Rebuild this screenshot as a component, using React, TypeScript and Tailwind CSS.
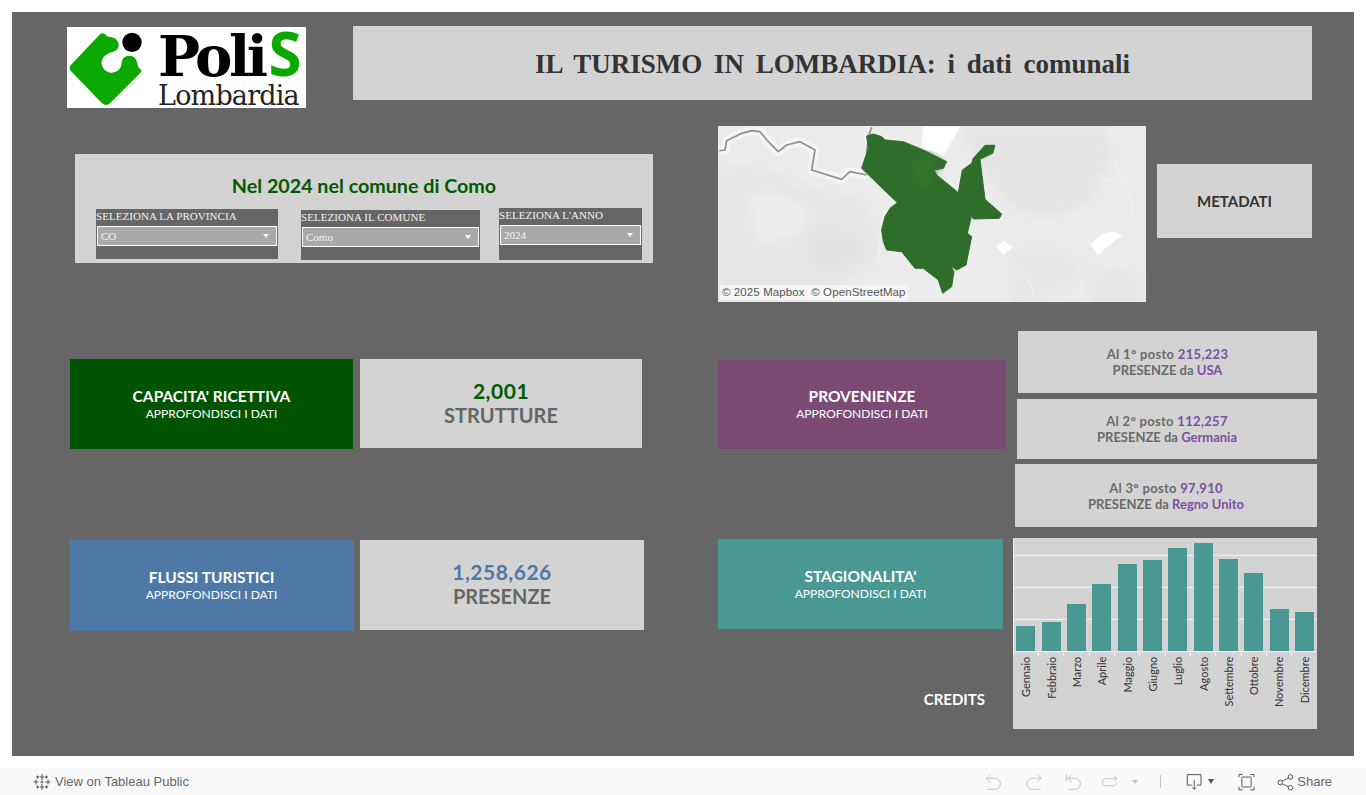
import React from 'react';

const TREBUCHET = 'font-["Lato",sans-serif]';

const MONTHS = [
  { name: 'Gennaio', x: 33, top: 288, label: 62 },
  { name: 'Febbraio', x: 111, top: 276, label: 139 },
  { name: 'Marzo', x: 186, top: 222, label: 215 },
  { name: 'Aprile', x: 261, top: 162, label: 290 },
  { name: 'Maggio', x: 339, top: 102, label: 367 },
  { name: 'Giugno', x: 414, top: 90, label: 443 },
  { name: 'Luglio', x: 489, top: 54, label: 518 },
  { name: 'Agosto', x: 567, top: 39, label: 595 },
  { name: 'Settembre', x: 642, top: 87, label: 670 },
  { name: 'Ottobre', x: 717, top: 129, label: 746 },
  { name: 'Novembre', x: 795, top: 237, label: 822 },
  { name: 'Dicembre', x: 870, top: 246, label: 899 },
];

const RIVER = 'M28 92 L45 90 L50 62 L95 40 L125 32 L150 35 L175 65 L205 95 L230 75 L270 65 L315 90 L305 150 L395 178 L420 155 L470 165';

const Logo = () => (
  <div className="w-[239px] h-[81px] mt-px bg-white flex shrink-0">
    <svg viewBox="201 81 273 243" className="w-[91px] h-[81px] shrink-0">
      <path
        fill="#0aa800"
        d="M300 103 Q308 97 315 103 Q322 112 335 112 Q352 115 356 132 Q358 148 340 155 Q322 158 310 172 Q298 190 312 208 Q328 225 350 214 Q365 205 365 185 Q368 168 388 167 Q408 168 412 190 Q414 205 424 210 Q426 215 420 220 L330 310 Q318 320 306 310 L212 212 Q205 205 212 196 Z"
      />
      <circle cx="396" cy="127" r="29" fill="#000" />
    </svg>
    <div className="flex flex-col">
      <div className="font-['DejaVu_Serif',serif] font-bold text-[56px] leading-[52px] tracking-[-3.5px] text-black whitespace-nowrap">
        Poli<span className="font-['Open_Sans',sans-serif] text-[60px] tracking-normal text-[#0aa800] ml-[4px]">S</span>
      </div>
      <div className="font-['DejaVu_Serif',serif] text-[27px] leading-[28px] tracking-[-0.8px] text-[#222] whitespace-nowrap">Lombardia</div>
    </div>
  </div>
);

interface FilterProps {
  label: string;
  value: string;
  className: string;
}

const Filter: React.FC<FilterProps> = ({ label, value, className }) => (
  <div className={`bg-[#666666] font-["Liberation_Serif",serif] text-[#f2f2f2] ${className}`}>
    <div className="text-[11px] leading-[14px] tracking-[0.06px] whitespace-nowrap">{label}</div>
    <div className="mx-px mt-[3px] h-5 border border-white bg-[#a9a9a9] flex items-center justify-between pl-[3px] pr-[7px] text-[11px]">
      <span>{value}</span>
      <span className="w-0 h-0 border-x-[3px] border-x-transparent border-t-[4px] border-t-white" />
    </div>
  </div>
);

const MapPanel = () => (
  <div className="relative w-[428px] h-[176px] bg-[#ebebeb] shrink-0 overflow-hidden">
    <svg viewBox="24 18 1284 528" className="w-full h-full block">
      <defs>
        <filter id="soft" x="-10%" y="-10%" width="120%" height="120%">
          <feGaussianBlur stdDeviation="14" />
        </filter>
      </defs>
      <rect x="24" y="18" width="1284" height="528" fill="#ececec" />
      <g filter="url(#soft)">
        <path d="M24 150 Q120 110 250 180 Q330 220 450 230 Q520 330 500 420 Q400 540 24 546 Z" fill="#e6e6e6" />
        <path d="M120 230 Q220 200 300 290 Q260 380 140 360 Z" fill="#ededed" />
        <path d="M300 340 Q400 300 470 380 Q420 470 310 450 Z" fill="#e2e2e2" />
        <path d="M750 20 H1180 Q1240 120 1140 240 Q1040 320 920 270 Q820 180 750 20 Z" fill="#e4e4e4" />
        <path d="M900 400 Q1050 340 1130 450 Q1080 540 900 546 Z" fill="#e7e7e7" />
        <path d="M1130 470 Q1220 420 1300 470 L1300 546 H1130 Z" fill="#e6e6e6" />
      </g>
      <path d={RIVER} fill="none" stroke="#f5f5f5" strokeWidth="26" strokeLinejoin="round" />
      <path d="M1150 155 Q1200 195 1235 175 Q1265 225 1270 300 Q1290 350 1305 355 M1215 130 Q1225 150 1235 175" fill="none" stroke="#f4f4f4" strokeWidth="3" />
      <path d="M380 30 Q420 50 470 70 M240 210 Q270 180 280 170 M460 190 Q480 230 530 260 M510 370 Q500 410 520 430 M920 440 Q960 470 970 520" fill="none" stroke="#f4f4f4" strokeWidth="3" />
      <path d="M640 20 H750 L700 110 L635 80 Z" fill="#ffffff" />
      <path d="M858 380 L880 363 L908 380 L880 405 Z" fill="#ffffff" />
      <path d="M1142 375 Q1170 335 1210 335 L1240 345 Q1200 370 1165 405 Z" fill="#ffffff" />
      <path d={RIVER} fill="none" stroke="#8f8f8f" strokeWidth="5" strokeLinejoin="round" />
      <path d="M470 100 L475 50 L485 22" fill="none" stroke="#8f8f8f" strokeWidth="5" />
      <path
        fill="#2e6e2a"
        stroke="#2e6e2a"
        strokeWidth="3"
        strokeLinejoin="round"
        d="M470 48 L490 42 L515 50 L525 60 L580 65 L640 90 L710 125 L700 145 L672 150 L680 165 L745 218 L757 150 L785 130 L790 115 L825 76 L855 76 L848 100 L810 118 L825 238 L875 282 L868 295 L790 297 L785 285 L772 340 L785 350 L768 435 L740 450 L722 438 L732 455 L725 500 L698 520 L685 480 L640 445 L615 445 L575 395 L530 390 L520 365 L515 330 L525 290 L540 265 L562 248 L455 145 L475 85 Z"
      />
      <path d="M600 130 L640 100 L695 130 L670 150 L660 200 L610 200 Z" fill="#32732e" filter="url(#soft)" />
    </svg>
    <div className='absolute left-[2px] bottom-[2px] px-[2px] bg-[#f6f6f6] text-[11.5px] tracking-[0.1px] leading-[15px] text-[#555] font-["Liberation_Sans",sans-serif] whitespace-nowrap'>
      © 2025 Mapbox&nbsp; © OpenStreetMap
    </div>
  </div>
);

interface SectionProps {
  title: string;
  className: string;
}

const SectionButton: React.FC<SectionProps> = ({ title, className }) => (
  <div className={`flex flex-col items-center justify-center text-white ${TREBUCHET} ${className}`}>
    <div className="text-[15.5px] leading-[19px] font-bold whitespace-nowrap">{title}</div>
    <div className="text-[12px] leading-[16px] whitespace-nowrap">APPROFONDISCI I DATI</div>
  </div>
);

interface KpiProps {
  value: string;
  label: string;
  color: string;
  className: string;
}

const Kpi: React.FC<KpiProps> = ({ value, label, color, className }) => (
  <div className={`bg-[#d3d3d3] pb-[2px] flex flex-col items-center justify-center ${TREBUCHET} ${className}`}>
    <div className={`text-[21px] leading-[25px] font-bold tracking-[0.5px] ${color}`}>{value}</div>
    <div className="text-[20px] leading-[25px] font-bold text-[#666666]">{label}</div>
  </div>
);

interface RankProps {
  pos: string;
  value: string;
  country: string;
  className: string;
}

const Rank: React.FC<RankProps> = ({ pos, value, country, className }) => (
  <div className={`bg-[#d3d3d3] flex flex-col items-center justify-center text-[13px] leading-4 font-bold text-[#6a6a6a] ${TREBUCHET} ${className}`}>
    <div className="tracking-[0.3px]">
      Al {pos}° posto <span className="text-[#7b4fa3]">{value}</span>
    </div>
    <div>
      PRESENZE da <span className="text-[#7b4fa3]">{country}</span>
    </div>
  </div>
);

const MonthsChart = () => (
  <div className="w-[304px] h-[191px] bg-[#d3d3d3] shrink-0">
    <svg viewBox="24 24 912 573" className="w-full h-full block">
      {[76, 172, 268].map((y) => (
        <line key={y} x1="24" x2="936" y1={y} y2={y} stroke="#f4f4f4" strokeWidth="3" />
      ))}
      {MONTHS.map((m) => (
        <rect key={m.name} x={m.x} y={m.top} width="57" height={363 - m.top} fill="#499894" />
      ))}
      <line x1="25" x2="25" y1="24" y2="365" stroke="#f4f4f4" strokeWidth="3" />
      <line x1="24" x2="936" y1="365" y2="365" stroke="#f4f4f4" strokeWidth="3" />
      {[24, 100, 175, 253, 328, 403, 481, 556, 631, 709, 784, 859].map((x) => (
        <line key={x} x1={x} x2={x} y1="365" y2="378" stroke="#f4f4f4" strokeWidth="3" />
      ))}
      {MONTHS.map((m) => (
        <text
          key={m.name}
          x={m.label + 13}
          y="380"
          transform={`rotate(-90 ${m.label + 13} 380)`}
          textAnchor="end"
          fontSize="33"
          fill="#333333"
          fontFamily="Lato, sans-serif"
        >
          {m.name}
        </text>
      ))}
    </svg>
  </div>
);

const Toolbar = () => (
  <div className='h-[27px] mt-3 bg-[#f9f9f9] flex items-center font-["Liberation_Sans",sans-serif] text-[13px] text-[#666666]'>
    <svg viewBox="0 0 18 18" className="w-[18px] h-[18px] ml-[33px] mr-1" stroke="#555" strokeWidth="1" fill="none">
      <path d="M9 1V7 M6.5 4H11.5 M9 11V17 M6.5 14H11.5 M3 6.5V11.5 M0.5 9H5.5 M15 6.5V11.5 M12.5 9H17.5 M4.5 2.5V5.5 M3 4H6 M13.5 2.5V5.5 M12 4H15 M4.5 12.5V15.5 M3 14H6 M13.5 12.5V15.5 M12 14H15 M9 7.5V10.5 M7.5 9H10.5" />
    </svg>
    <span>View on Tableau Public</span>

    <div className="ml-auto mr-[34px] flex items-center">
      <svg viewBox="45 68 55 55" className="w-[18px] h-[18px]" fill="none" stroke="#c4c4c4" strokeWidth="3">
        <path d="M60 73 L49 84 L60 95 M49 84 H75 A17 17 0 0 1 75 118 H50" />
      </svg>
      <svg viewBox="165 68 55 55" className="w-[18px] h-[18px] ml-[22px]" fill="none" stroke="#c4c4c4" strokeWidth="3">
        <path d="M203 73 L214 84 L203 95 M214 84 H188 A17 17 0 0 0 188 118 H213" />
      </svg>
      <svg viewBox="285 68 55 55" className="w-[18px] h-[18px] ml-[22px]" fill="none" stroke="#c4c4c4" strokeWidth="3">
        <path d="M289 72 V94 M305 73 L294 84 L305 95 M294 84 H315 A17 17 0 0 1 315 118 H296" />
      </svg>
      <svg viewBox="393 68 55 55" className="w-[18px] h-[18px] ml-[18px]" fill="none" stroke="#c4c4c4" strokeWidth="3">
        <path d="M432 76 L442 85 L432 94 M440 85 H408 A11 11 0 0 0 408 107 H432 A11 11 0 0 0 441 97" />
      </svg>
      <span className="ml-[13px] w-0 h-0 border-x-[3.5px] border-x-transparent border-t-[4px] border-t-[#c4c4c4]" />
      <span className="ml-[22px] w-px h-[13px] bg-[#c4c4c4]" />
      <svg viewBox="652 68 50 55" className="w-[17px] h-[18px] ml-[25px]" fill="none" stroke="#555" strokeWidth="3">
        <path d="M668 105 H655 V73 H697 V105 H684 M676 90 V118 M670 112 L676 118 L682 112" />
      </svg>
      <span className="ml-[5px] w-0 h-0 border-x-[3.5px] border-x-transparent border-t-[5px] border-t-[#555]" />
      <svg viewBox="805 68 53 55" className="w-[17px] h-[18px] ml-[24px]" fill="none" stroke="#555" strokeWidth="3">
        <path d="M808 80 V72 H820 M843 72 H855 V80 M855 110 V120 H843 M820 120 H808 V110" />
        <rect x="817" y="80" width="29" height="31" rx="2" />
      </svg>
      <svg viewBox="918 68 50 55" className="w-[17px] h-[18px] ml-[22px]" fill="none" stroke="#555" strokeWidth="3">
        <circle cx="927" cy="97" r="7" />
        <circle cx="958" cy="80" r="7" />
        <circle cx="958" cy="113" r="7" />
        <path d="M933 93 L952 83 M933 101 L952 110" />
      </svg>
      <span className="ml-[3px] font-medium">Share</span>
    </div>
  </div>
);

export default function App() {
  return (
    <div className="w-[1366px] h-[795px] bg-white overflow-hidden pt-3">
      <div className="ml-3 w-[1342px] h-[744px] bg-[#666666] pt-[14px]">
        {/* Header */}
        <div className="flex items-start h-[82px] pl-[55px]">
          <Logo />
          <div className='ml-[47px] w-[959px] h-[74px] pt-[2px] bg-[#d3d3d3] flex items-center justify-center font-["Liberation_Serif",serif] font-bold text-[27px] text-[#333333] [word-spacing:5px]'>
            IL TURISMO IN LOMBARDIA: i dati comunali
          </div>
        </div>

        <div className="flex pl-[55px]">
          {/* Left column */}
          <div className="w-[586px] shrink-0">
            <div className="mt-[46px] ml-2 w-[578px] h-[109px] bg-[#d3d3d3]">
              <div className={`pt-[21px] text-center text-[19.7px] leading-[22px] font-bold text-[#005a00] ${TREBUCHET}`}>
                Nel 2024 nel comune di Como
              </div>
              <div className="flex items-start mt-3">
                <Filter label="SELEZIONA LA PROVINCIA" value="CO" className="ml-[21px] w-[182px] h-[50px]" />
                <Filter label="SELEZIONA IL COMUNE" value="Como" className="ml-[23px] w-[179px] h-[50px] mt-px" />
                <Filter label="SELEZIONA L'ANNO" value="2024" className="ml-[19px] w-[143px] h-[52px] -mt-px" />
              </div>
            </div>

            <div className="flex items-start mt-[96px] ml-[3px]">
              <SectionButton title="CAPACITA' RICETTIVA" className="w-[283px] h-[90px] bg-[#005400]" />
              <Kpi value="2,001" label="STRUTTURE" color="text-[#005a00]" className="ml-[7px] w-[282px] h-[89px]" />
            </div>

            <div className="flex items-start mt-[91px] ml-[2px]">
              <SectionButton title="FLUSSI TURISTICI" className="w-[285px] h-[91px] pb-px bg-[#4e79a7]" />
              <Kpi value="1,258,626" label="PRESENZE" color="text-[#4e79a7]" className="ml-[6px] w-[284px] h-[90px]" />
            </div>
          </div>

          {/* Right column */}
          <div className="ml-[65px] w-[599px] shrink-0">
            <div className="flex items-start mt-[18px]">
              <MapPanel />
              <div className={`ml-[11px] mt-[38px] w-[155px] h-[74px] bg-[#d3d3d3] flex items-center justify-center text-[15px] font-bold text-[#333333] ${TREBUCHET}`}>
                METADATI
              </div>
            </div>

            <div className="flex items-start mt-[29px]">
              <SectionButton title="PROVENIENZE" className="mt-[29px] w-[288px] h-[89px] bg-[#7b4b76]" />
              <div className="ml-[9px] w-[302px] flex flex-col items-end">
                <Rank pos="1" value="215,223" country="USA" className="w-[299px] h-[62px]" />
                <Rank pos="2" value="112,257" country="Germania" className="mt-[6px] w-[300px] h-[60px]" />
                <Rank pos="3" value="97,910" country="Regno Unito" className="mt-[5px] w-[302px] h-[63px]" />
              </div>
            </div>

            <div className="flex items-start mt-[11px]">
              <div className="w-[295px] shrink-0 flex flex-col">
                <SectionButton title="STAGIONALITA'" className="mt-px w-[285px] h-[90px] bg-[#499894]" />
                <div className={`mt-[60px] mr-[28px] self-end text-[15px] leading-5 font-bold text-white ${TREBUCHET}`}>CREDITS</div>
              </div>
              <MonthsChart />
            </div>
          </div>
        </div>
      </div>
      <Toolbar />
    </div>
  );
}
